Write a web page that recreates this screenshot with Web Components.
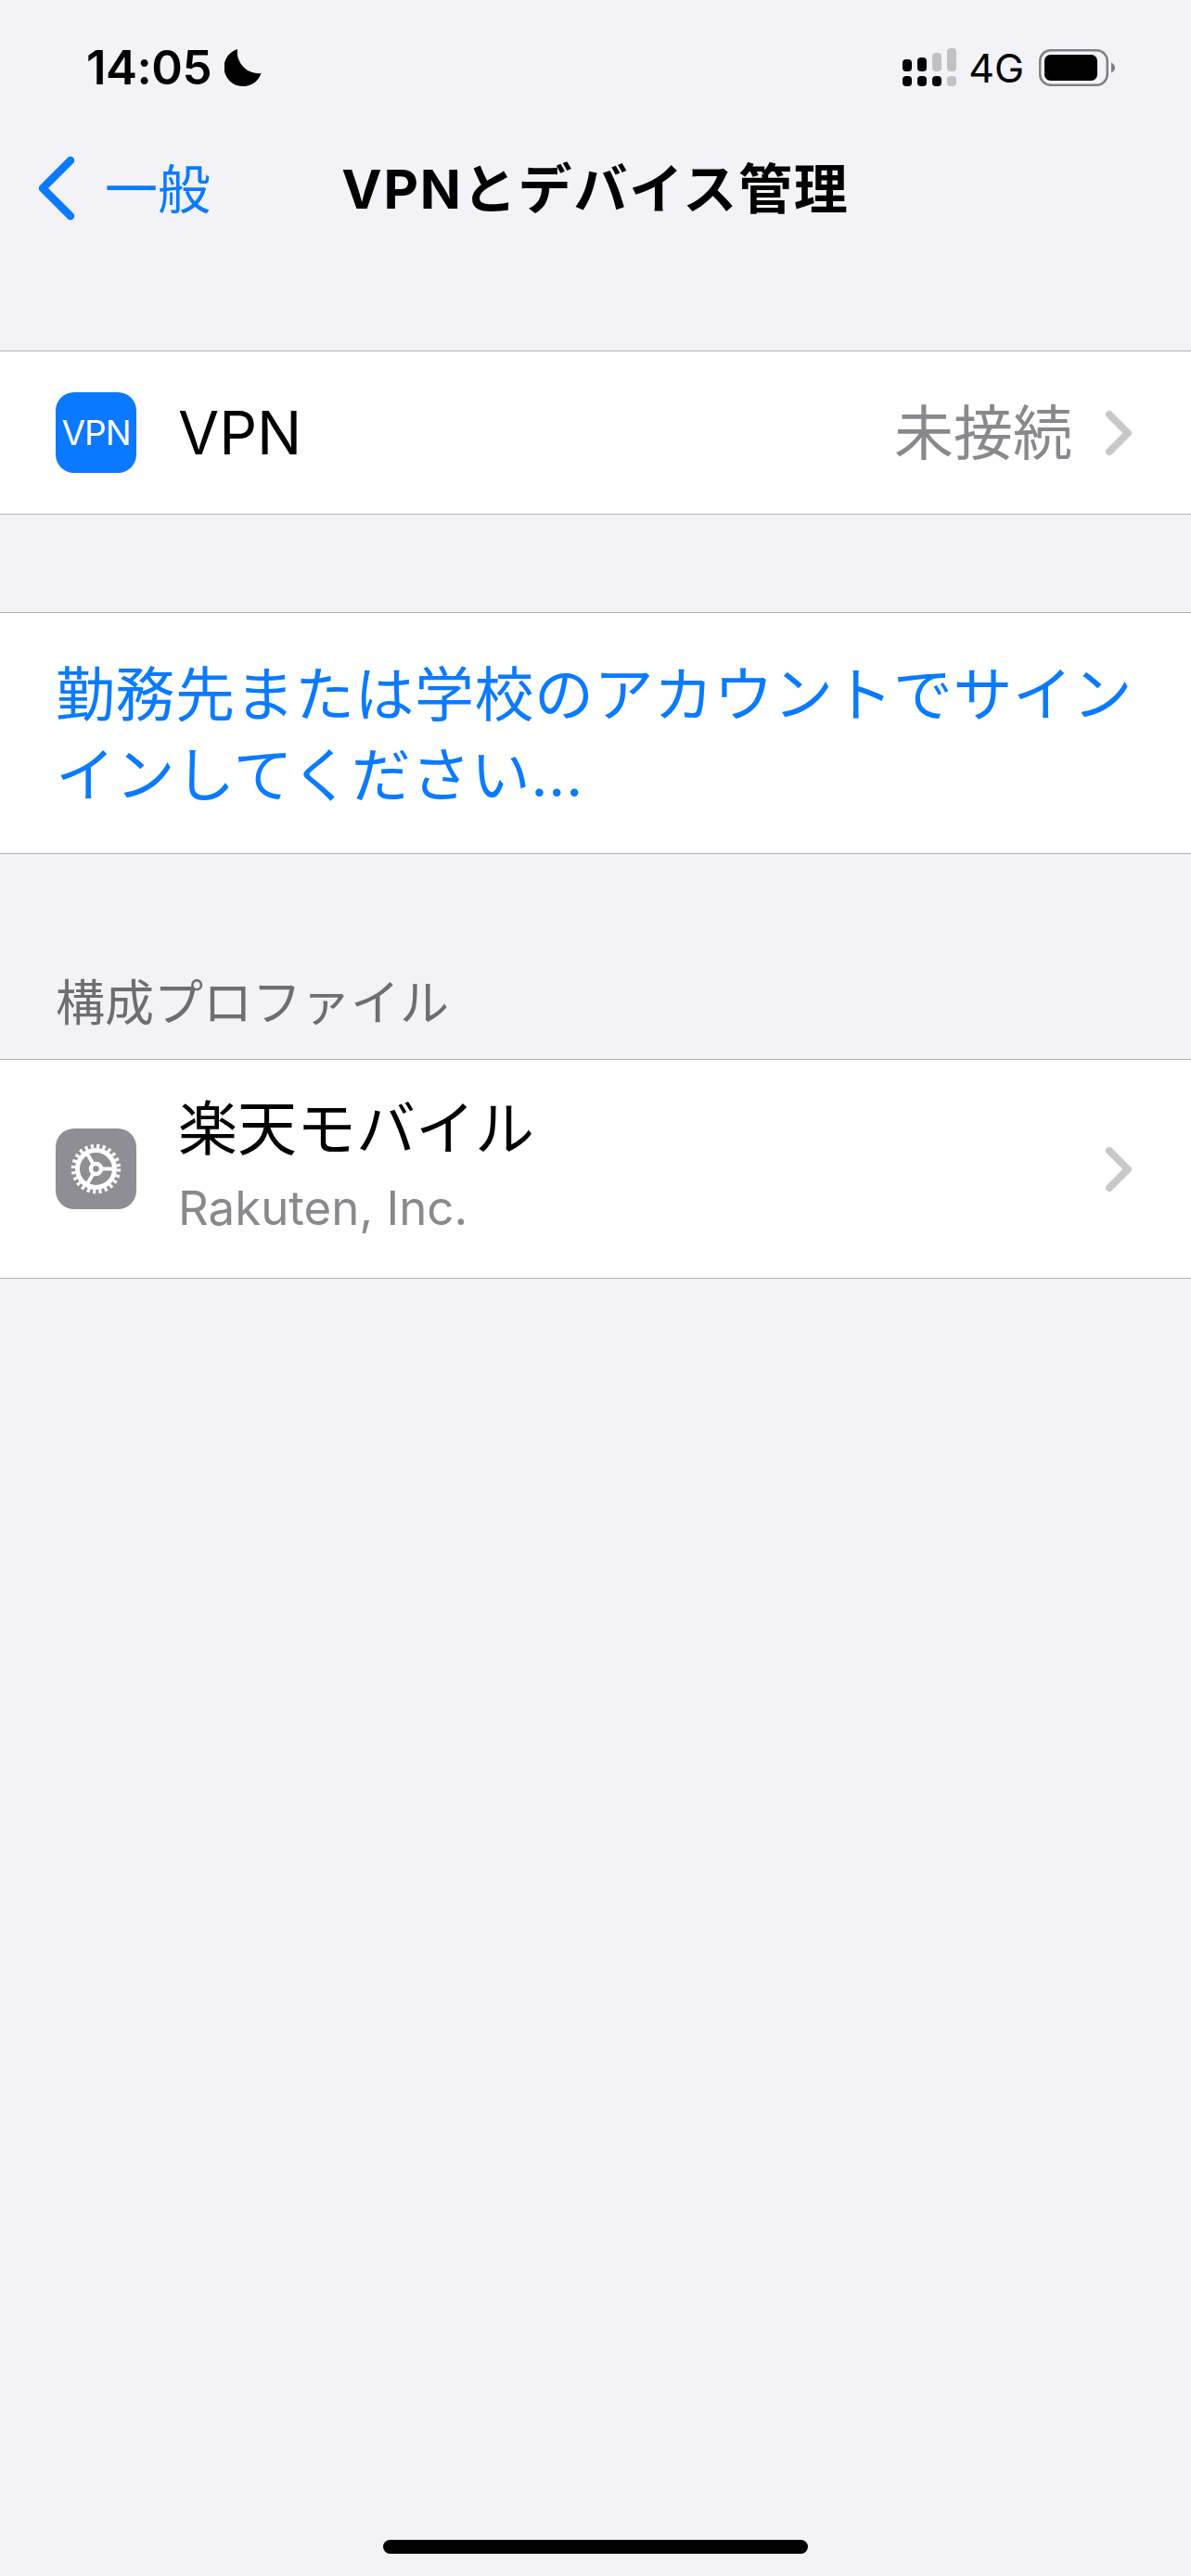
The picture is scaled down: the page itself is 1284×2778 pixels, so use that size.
<!DOCTYPE html>
<html lang="ja">
<head>
<meta charset="utf-8">
<title>VPNとデバイス管理</title>
<style>
  html,body{ margin:0; padding:0; }
  body{
    background:#f2f2f7;
    font-family: Inter, "Noto Sans CJK JP", sans-serif;
    color:#000;
  }
</style>
</head>
<body>
<settings-page>
  <status-bar time="14:05" network="4G"></status-bar>
  <nav-bar back="一般">VPNとデバイス管理</nav-bar>

  <list-group style="margin-top:120px">
    <list-row height="175">
      <app-icon slot="icon" kind="vpn"></app-icon>
      <span slot="title">VPN</span>
      <span slot="value">未接続</span>
    </list-row>
  </list-group>

  <list-group style="margin-top:105px">
    <link-row>勤務先または学校のアカウントでサインインしてください...</link-row>
  </list-group>

  <section-label>構成プロファイル</section-label>

  <list-group>
    <list-row height="235">
      <app-icon slot="icon" kind="gear"></app-icon>
      <span slot="title">楽天モバイル</span>
      <span slot="subtitle">Rakuten, Inc.</span>
    </list-row>
  </list-group>

  <home-bar></home-bar>
</settings-page>

<script>
  class SettingsPage extends HTMLElement{
    constructor(){
      super();
      this.attachShadow({mode:"open"});
      this.shadowRoot.innerHTML = `
      <style>
      :host{
        display:flex;
        flex-direction:column;
        height:2778px;
        overflow:hidden;
      }
      </style>
      <slot></slot>`;
    }
  }

  //top status bar
  class StatusBar extends HTMLElement{
    constructor(){
      super();
      this.attachShadow({mode:"open"});
      const time = this.getAttribute("time");
      const network = this.getAttribute("network");
      this.shadowRoot.innerHTML = `
      <style>
      :host{
        display:flex;
        align-items:center;
        justify-content:space-between;
        height:146px;
        padding:0 82px 0 93px;
      }
      .left,.right{ display:flex; align-items:center; }
      .time{ font-size:51px; font-weight:600; letter-spacing:-.5px; line-height:60px; }
      .moon{ margin-left:14px; }
      .net{ font-size:43px; font-weight:400; line-height:50px; margin:0 16px 0 13px; }
      svg{ display:block; }
      </style>
      <div class="left">
        <span class="time">${time}</span>
        <svg class="moon" width="40" height="42" viewBox="0 0 40 42">
          <path fill="#000" d="M14 1 A20.5 20.5 0 1 0 39.5 27 A23 23 0 0 1 14 1 Z"/>
        </svg>
      </div>
      <div class="right">
        <svg width="58" height="42" viewBox="0 0 58 42">
          <rect x="0" y="12" width="10" height="13" rx="4"/>
          <rect x="16" y="10" width="10" height="15" rx="4"/>
          <rect x="32" y="5" width="10" height="20" rx="4" fill="#c0c0c5"/>
          <rect x="48" y="0" width="10" height="25" rx="4" fill="#c0c0c5"/>
          <rect x="0" y="30" width="10" height="11" rx="4"/>
          <rect x="16" y="30" width="10" height="11" rx="4"/>
          <rect x="32" y="30" width="10" height="11" rx="4"/>
          <rect x="48" y="30" width="10" height="11" rx="4" fill="#c0c0c5"/>
        </svg>
        <span class="net">${network}</span>
        <svg width="82" height="40" viewBox="0 0 82 40">
          <rect x="1.25" y="1.25" width="72.5" height="37.5" rx="11.5" fill="none" stroke="#808084" stroke-width="2.5"/>
          <rect x="6" y="6" width="57" height="28" rx="6.5" fill="#000"/>
          <path fill="#808084" d="M78 14.5 C80.5 15.5 82 17.5 82 20 C82 22.5 80.5 24.5 78 25.5 Z"/>
        </svg>
      </div>`;
    }
  }

  //navigation bar, title stays centred whatever the back label is
  class NavBar extends HTMLElement{
    constructor(){
      super();
      this.attachShadow({mode:"open"});
      const back = this.getAttribute("back");
      this.shadowRoot.innerHTML = `
      <style>
      :host{
        display:grid;
        grid-template-columns:1fr auto 1fr;
        align-items:center;
        box-sizing:border-box;
        height:112px;
        padding-bottom:5px;
      }
      .back{
        display:flex;
        align-items:center;
        gap:31px;
        padding-left:38px;
        color:#0a7aff;
        font-size:57px;
      }
      .title{ font-size:58px; font-weight:700; letter-spacing:1.8px; white-space:nowrap; }
      svg{ display:block; margin-top:6px; }
      </style>
      <div class="back">
        <svg width="44" height="72" viewBox="0 0 44 72">
          <path d="M38 6 L8 36 L38 66" fill="none" stroke="#0a7aff" stroke-width="8.5" stroke-linecap="round" stroke-linejoin="round"/>
        </svg>
        <span>${back}</span>
      </div>
      <div class="title"><slot></slot></div>
      <div></div>`;
    }
  }

  //white group with hairlines top and bottom
  class ListGroup extends HTMLElement{
    constructor(){
      super();
      this.attachShadow({mode:"open"});
      this.shadowRoot.innerHTML = `
      <style>
      :host{
        display:block;
        background:#fff;
        border-top:1px solid #b4b4b8;
        border-bottom:1px solid #b4b4b8;
      }
      </style>
      <slot></slot>`;
    }
  }

  const rowTemplate = document.createElement("template");
  rowTemplate.innerHTML = `
  <style>
  :host{
    display:flex;
    align-items:center;
    box-sizing:border-box;
    padding:0 63px 0 60px;
  }
  .icon{ display:flex; flex:none; width:87px; margin-right:45px; }
  .text{ flex:1; min-width:0; display:flex; flex-direction:column; }
  .title{ font-size:64px; line-height:80px; }
  .sub{ font-size:51px; line-height:60px; color:#88888d; margin-top:16px; margin-bottom:12px; }
  .value{ font-size:64px; color:#88888d; line-height:80px; margin-right:35px; }
  svg{ display:block; flex:none; }
  </style>
  <div class="icon"><slot name="icon"></slot></div>
  <div class="text">
    <div class="title"><slot name="title"></slot></div>
    <div class="sub"><slot name="subtitle"></slot></div>
  </div>
  <div class="value"><slot name="value"></slot></div>
  <svg width="30" height="50" viewBox="0 0 30 50">
    <path d="M5 5 L25 25 L5 45" fill="none" stroke="#c7c7cc" stroke-width="8" stroke-linecap="round" stroke-linejoin="round"/>
  </svg>
  `;

  //settings row: icon, title, optional subtitle, optional value and chevron
  class ListRow extends HTMLElement{
    constructor(){
      super();
      this.attachShadow({mode:"open"});
      this.shadowRoot.appendChild(rowTemplate.content.cloneNode(true));
    }
    connectedCallback(){
      this.style.height = this.getAttribute("height") + "px";
      if(!this.querySelector('[slot="subtitle"]')){
        this.shadowRoot.querySelector(".sub").style.display = "none";
      }
    }
  }

  //blue action text
  class LinkRow extends HTMLElement{
    constructor(){
      super();
      this.attachShadow({mode:"open"});
      this.shadowRoot.innerHTML = `
      <style>
      :host{
        display:block;
        box-sizing:border-box;
        height:259px;
        padding:44px 50px 0 60px;
        color:#0a7aff;
        font-size:64px;
        letter-spacing:.5px;
        line-height:87px;
      }
      </style>
      <slot></slot>`;
    }
  }

  class SectionLabel extends HTMLElement{
    constructor(){
      super();
      this.attachShadow({mode:"open"});
      this.shadowRoot.innerHTML = `
      <style>
      :host{
        display:block;
        padding:131px 60px 30px;
        color:#6d6d72;
        font-size:53px;
        line-height:60px;
      }
      </style>
      <slot></slot>`;
    }
  }

  //rounded square icons, vpn badge or settings gear
  class AppIcon extends HTMLElement{
    constructor(){
      super();
      this.attachShadow({mode:"open"});
      const kind = this.getAttribute("kind");
      const inner = kind === "vpn"
        ? `<span class="vpn">VPN</span>`
        : `<svg width="87" height="87" viewBox="0 0 87 87" fill="none" stroke="#fff">
            <circle cx="43.5" cy="43.5" r="24.5" stroke-width="4.5" stroke-dasharray="3.2 3.21"/>
            <circle cx="43.5" cy="43.5" r="20" stroke-width="5"/>
            <path stroke-width="4" d="M49.5 43.5 H63.5 M40.5 38.3 L33.5 26.2 M40.5 48.7 L33.5 60.8"/>
            <circle cx="43.5" cy="43.5" r="5.5" stroke-width="4.5"/>
          </svg>`;
      this.shadowRoot.innerHTML = `
      <style>
      :host{
        display:flex;
        align-items:center;
        justify-content:center;
        width:87px;
        height:87px;
        border-radius:20px;
        background:${kind === "vpn" ? "#0a78ff" : "#8e8e93"};
      }
      .vpn{ color:#fff; font-size:37px; letter-spacing:-1px; line-height:40px; }
      svg{ display:block; }
      </style>
      ${inner}`;
    }
  }

  class HomeBar extends HTMLElement{
    constructor(){
      super();
      this.attachShadow({mode:"open"});
      this.shadowRoot.innerHTML = `
      <style>
      :host{
        display:block;
        align-self:center;
        width:458px;
        height:15px;
        margin-top:auto;
        margin-bottom:24px;
        border-radius:8px;
        background:#000;
      }
      </style>`;
    }
  }

  customElements.define("settings-page", SettingsPage);
  customElements.define("status-bar", StatusBar);
  customElements.define("nav-bar", NavBar);
  customElements.define("list-group", ListGroup);
  customElements.define("list-row", ListRow);
  customElements.define("link-row", LinkRow);
  customElements.define("section-label", SectionLabel);
  customElements.define("app-icon", AppIcon);
  customElements.define("home-bar", HomeBar);
</script>
</body>
</html>
